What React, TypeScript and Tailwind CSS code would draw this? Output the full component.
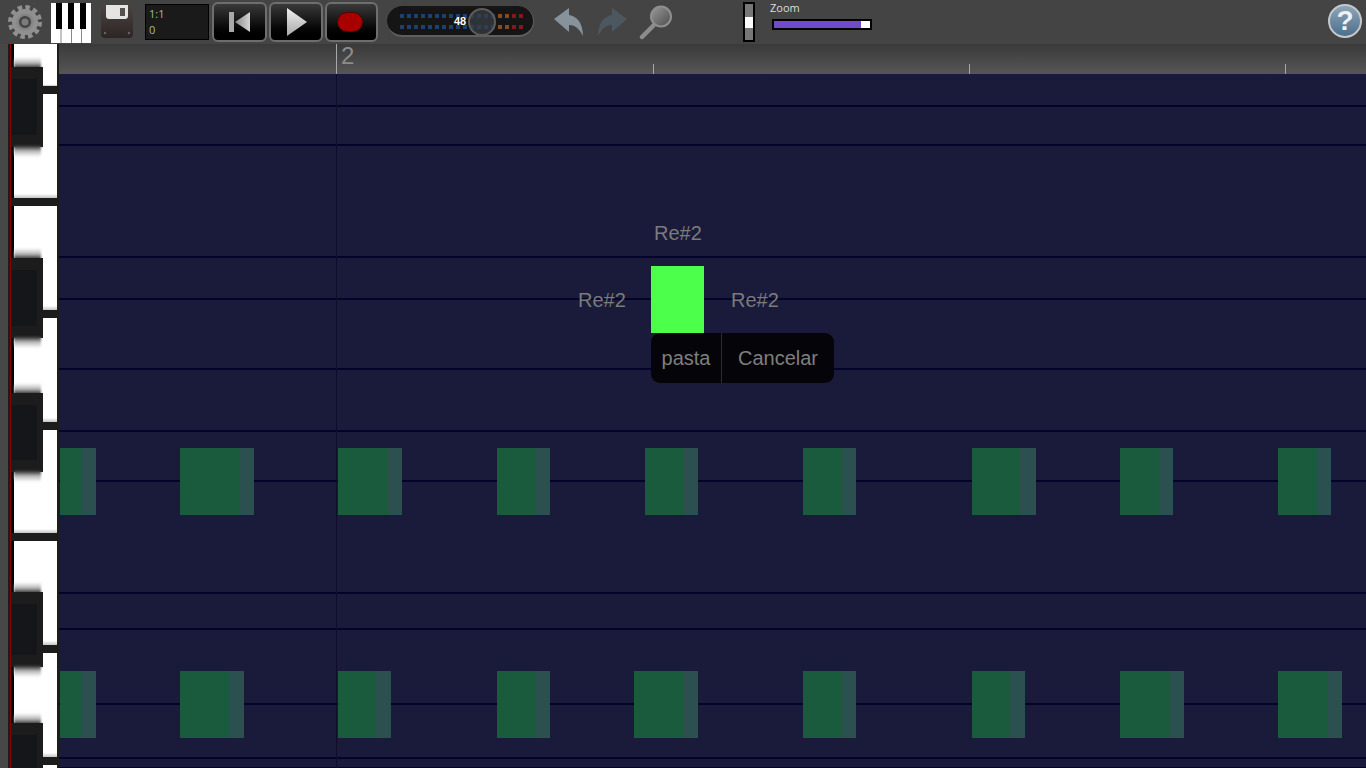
import React from "react";

const ROWS = [
  "h-[33px]",
  "h-[39px]",
  "h-[112px]",
  "h-[42px]",
  "h-[70px]",
  "h-[62px]",
  "h-[50px]",
  "h-[112px]",
  "h-[36px]",
  "h-[75px]",
  "h-[54px]",
  "h-[10px]",
];

const WHITE_KEYS = [
  "h-[42px]",
  "h-[104px]",
  "h-[104px]",
  "h-[104px]",
  "h-[103px]",
  "h-[104px]",
  "h-[104px]",
  "h-[10px]",
];

// top and height are relative to the piano column, which starts at y=44
const BLACK_KEYS = [
  { top: 23, height: 80 },
  { top: 214, height: 80 },
  { top: 349, height: 79 },
  { top: 548, height: 75 },
  { top: 679, height: 80 },
];

const NOTES_A = [
  { left: 1, width: 36, tail: 15 },
  { left: 121, width: 74, tail: 14 },
  { left: 279, width: 64, tail: 14 },
  { left: 438, width: 53, tail: 14 },
  { left: 586, width: 53, tail: 14 },
  { left: 744, width: 53, tail: 14 },
  { left: 913, width: 64, tail: 16 },
  { left: 1061, width: 53, tail: 14 },
  { left: 1219, width: 53, tail: 14 },
];

const NOTES_B = [
  { left: 1, width: 36, tail: 15 },
  { left: 121, width: 64, tail: 15 },
  { left: 279, width: 53, tail: 15 },
  { left: 438, width: 53, tail: 14 },
  { left: 575, width: 64, tail: 14 },
  { left: 744, width: 53, tail: 14 },
  { left: 913, width: 53, tail: 15 },
  { left: 1061, width: 64, tail: 14 },
  { left: 1219, width: 64, tail: 14 },
];

const LEDS = Array.from({ length: 36 }, (_, i) => {
  const col = i % 18;
  if (col >= 16) return "bg-[#84191c]";
  if (col >= 14) return "bg-[#8a4a1e]";
  return "bg-[#1a4170]";
});

function Gear() {
  return (
    <svg width="36" height="36" viewBox="0 0 36 36" className="mt-1">
      <defs>
        <radialGradient id="gearFill">
          <stop offset="0" stopColor="#5d5d5d" />
          <stop offset="1" stopColor="#909090" />
        </radialGradient>
      </defs>
      <circle cx="18" cy="18" r="14" fill="none" stroke="url(#gearFill)" strokeWidth="6" strokeDasharray="4.2 3.13" />
      <circle cx="18" cy="18" r="9.5" fill="none" stroke="url(#gearFill)" strokeWidth="7" />
      <circle cx="18" cy="18" r="3.5" fill="#7b7b7b" />
    </svg>
  );
}

function PianoIcon() {
  return (
    <svg width="40" height="41" viewBox="0 0 40 41" className="mt-[3px]">
      <rect width="40" height="40" fill="#fff" />
      <rect x="5" width="6" height="26" fill="#000" />
      <rect x="17" width="6" height="26" fill="#000" />
      <rect x="29" width="6" height="26" fill="#000" />
      <rect x="9.5" y="26" width="1" height="14" fill="#888" />
      <rect x="20" y="26" width="1" height="14" fill="#888" />
      <rect x="30" y="26" width="1" height="14" fill="#888" />
    </svg>
  );
}

function Floppy() {
  return (
    <svg width="32" height="34" viewBox="0 0 32 34" className="mt-[5px]">
      <defs>
        <linearGradient id="floppyBody" x1="0" y1="0" x2="0" y2="1">
          <stop offset="0" stopColor="#4a4442" />
          <stop offset="1" stopColor="#2c2523" />
        </linearGradient>
      </defs>
      <rect width="32" height="33" rx="4" fill="url(#floppyBody)" />
      <path d="M5 0h22v11q0 3-3 3H8q-3 0-3-3z" fill="#e4e4e4" />
      <rect x="19" y="3" width="5" height="8" fill="#56504e" />
      <circle cx="4" cy="28" r="1.2" fill="#6b6462" />
      <circle cx="28" cy="28" r="1.2" fill="#6b6462" />
    </svg>
  );
}

function TransportButton({ className, children }: { className: string; children: React.ReactNode }) {
  return (
    <div
      className={`${className} mt-[2px] h-[40px] flex items-center justify-center rounded-[6px] border-2 border-[#6e6e6e] bg-gradient-to-b from-[#3a3a3a] via-[#141414] to-[#000]`}
    >
      {children}
    </div>
  );
}

function Meter() {
  return (
    <div className="relative ml-[9px] mt-[6px] w-[147px] h-[31px] rounded-full bg-[#151515] border-b-2 border-r border-[#5f5f5f] pl-[13px] pt-[8px]">
      <div className="grid grid-cols-[repeat(18,4px)] gap-x-[3px] gap-y-[7px]">
        {LEDS.map((c, i) => (
          <div key={i} className={`h-[4px] ${c}`} />
        ))}
      </div>
      <span className="absolute left-[67px] top-[9px] text-[11px] leading-[13px] font-bold text-white font-['Liberation_Sans',sans-serif]">
        48
      </span>
      <div className="absolute left-[81px] top-[2px] w-[28px] h-[28px] rounded-full border-2 border-[#5c5c5c] bg-[#3a4046]/70" />
    </div>
  );
}

function Arrow({ flip, color }: { flip?: boolean; color: string }) {
  return (
    <svg width="31" height="30" viewBox="0 0 31 30" className={`mt-[7px] ${flip ? "-scale-x-100" : ""}`}>
      <path d="M1 12 16 1v7c8 1 14 8 14 21-4-7-7-11-14-11v7z" fill={color} />
    </svg>
  );
}

function Magnifier() {
  return (
    <svg width="36" height="36" viewBox="0 0 36 36" className="mt-1">
      <defs>
        <linearGradient id="lens" x1="0" y1="0" x2="1" y2="1">
          <stop offset="0" stopColor="#9a9a9a" />
          <stop offset="1" stopColor="#4c4c4c" />
        </linearGradient>
      </defs>
      <path d="M14 22 3 33" stroke="#8c8c8c" strokeWidth="4.5" strokeLinecap="round" />
      <circle cx="22" cy="12.5" r="10" fill="url(#lens)" stroke="#8f8f8f" strokeWidth="2" />
    </svg>
  );
}

function Help() {
  return (
    <div className="ml-auto mr-[4px] mt-[4px] w-[34px] h-[34px] rounded-full border-2 border-[#c4c8cc] bg-gradient-to-b from-[#8da5ba] to-[#4c6f8c] flex items-center justify-center text-[28px] leading-none font-bold text-[#eef0f2] font-['Liberation_Sans',sans-serif]">
      ?
    </div>
  );
}

function Toolbar() {
  return (
    <div className="h-[44px] flex bg-[#444444]">
      <div className="ml-[7px]">
        <Gear />
      </div>
      <div className="ml-[8px]">
        <PianoIcon />
      </div>
      <div className="ml-[10px]">
        <Floppy />
      </div>
      <div className="ml-[12px] mt-[4px] w-[64px] h-[36px] bg-[#1a1a1a] border border-black pl-[3px] pt-[1px] text-[11px] leading-[16px] text-[#a9bd8c] font-['Open_Sans',sans-serif]">
        <div>1:1</div>
        <div>0</div>
      </div>
      <TransportButton className="ml-[3px] w-[55px]">
        <svg width="22" height="22" viewBox="0 0 22 22">
          <defs>
            <linearGradient id="skipFill" x1="0" y1="0" x2="1" y2="0">
              <stop offset="0" stopColor="#8a8a8a" />
              <stop offset="1" stopColor="#d4d4d4" />
            </linearGradient>
          </defs>
          <rect x="0" y="1" width="5" height="20" fill="#a8a8a8" />
          <path d="M21 1v20L6 11z" fill="url(#skipFill)" />
        </svg>
      </TransportButton>
      <TransportButton className="ml-[2px] w-[54px]">
        <svg width="20" height="28" viewBox="0 0 20 28" className="ml-[2px]">
          <defs>
            <linearGradient id="playFill" x1="0" y1="0" x2="0" y2="1">
              <stop offset="0" stopColor="#f0f0f0" />
              <stop offset="1" stopColor="#a8a8a8" />
            </linearGradient>
          </defs>
          <path d="M0 0v28L20 14z" fill="url(#playFill)" />
        </svg>
      </TransportButton>
      <TransportButton className="ml-[2px] w-[53px]">
        <div className="mr-[3px] w-[26px] h-[20px] rounded-full bg-[#a80000] border border-[#5a0000]" />
      </TransportButton>
      <Meter />
      <div className="ml-[19px]">
        <Arrow color="#87929b" />
      </div>
      <div className="ml-[13px]">
        <Arrow flip color="#4d5760" />
      </div>
      <div className="ml-[11px]">
        <Magnifier />
      </div>
      <div className="ml-[68px] mt-[2px] w-[12px] h-[40px] border-2 border-black bg-[#777] flex items-center">
        <div className="w-full h-[11px] bg-white" />
      </div>
      <div className="ml-[15px] w-[102px] font-['Open_Sans',sans-serif] text-[11px] leading-[14px] text-[#dddddd]">
        <div className="mt-[1px]">Zoom</div>
        <div className="ml-[2px] mt-[4px] w-[100px] h-[11px] border-2 border-black bg-white">
          <div className="h-full w-[87px] bg-[#6f4acb]" />
        </div>
      </div>
      <Help />
    </div>
  );
}

function Piano() {
  return (
    <div className="relative w-[59px] h-[724px] shrink-0 flex bg-[#1c1c1c] overflow-hidden">
      <div className="w-[8px] bg-[#474747]" />
      <div className="w-[2px]" />
      <div className="w-[1px] bg-[#8a0000]" />
      <div className="w-[46px] flex flex-col gap-[8px]">
        {WHITE_KEYS.map((h, i) => (
          <div key={i} className={`${h} shrink-0 border-l-[3px] border-black bg-gradient-to-b from-white from-[96%] to-[#c4c4c4]`} />
        ))}
      </div>
      {BLACK_KEYS.map((k, i) => (
        <div key={i} className="absolute left-[11px] w-[32px]" style={{ top: k.top, height: k.height }}>
          <div className="absolute left-[3px] -top-[10px] w-[27px] h-[12px] blur-[1px] bg-gradient-to-b from-white/0 via-[#b8b8b8] via-50% to-[#1c1c1c]" />
          <div className="relative h-full bg-[#1c1c1c] py-[12px] pr-[6px]">
            <div className="h-full bg-[#14161a]" />
          </div>
          <div className="absolute left-[3px] -bottom-[10px] w-[27px] h-[12px] blur-[1px] bg-gradient-to-b from-[#1c1c1c] via-[#b8b8b8] via-50% to-white/0" />
        </div>
      ))}
    </div>
  );
}

function Tick({ className }: { className: string }) {
  return <div className={`absolute bottom-0 w-px bg-[#a8a8a8] ${className}`} />;
}

function NoteRow({ notes, className }: { notes: typeof NOTES_A; className: string }) {
  return (
    <>
      {notes.map((n, i) => (
        <div
          key={i}
          className={`absolute h-[67px] flex justify-end bg-[#1b5b3d] ${className}`}
          style={{ left: n.left, width: n.width }}
        >
          <div className="h-full bg-[#2c4f50]" style={{ width: n.tail }} />
        </div>
      ))}
    </>
  );
}

function Roll() {
  return (
    <div className="relative flex-1 h-[694px] bg-[#1a1a3a] overflow-hidden font-['Liberation_Sans',sans-serif]">
      {ROWS.map((h, i) => (
        <div key={i} className={`${h} border-b-2 border-[#04042a]`} />
      ))}
      <div className="absolute left-[277px] top-0 bottom-0 w-px bg-[#0e0e2c]" />

      <NoteRow notes={NOTES_A} className="top-[374px]" />
      <NoteRow notes={NOTES_B} className="top-[597px]" />

      <span className="absolute left-[595px] top-[147px] text-[20px] leading-[24px] text-[#7b7b7b]">Re#2</span>
      <span className="absolute left-[519px] top-[214px] text-[20px] leading-[24px] text-[#7b7b7b]">Re#2</span>
      <span className="absolute left-[672px] top-[214px] text-[20px] leading-[24px] text-[#7b7b7b]">Re#2</span>
      <div className="absolute left-[592px] top-[192px] w-[53px] h-[67px] bg-[#4bff4b]" />

      <div className="absolute left-[592px] top-[259px] w-[183px] h-[50px] flex rounded-[9px] bg-[#050509] text-[20px] text-[#7f7f7f]">
        <div className="w-[71px] flex items-center justify-center border-r border-[#2c2c2c]">pasta</div>
        <div className="flex-1 flex items-center justify-center">Cancelar</div>
      </div>
    </div>
  );
}

export default function App() {
  return (
    <div className="w-[1366px] h-[768px] overflow-hidden bg-[#444444]">
      <Toolbar />
      <div className="flex">
        <Piano />
        <div className="flex-1">
          <div className="relative h-[30px] bg-gradient-to-b from-[#3a3a3a] to-[#565656]">
            <Tick className="left-[277px] h-[30px]" />
            <span className="absolute left-[282px] top-0 text-[24px] leading-[24px] text-[#8c8c8c] font-['Liberation_Sans',sans-serif]">
              2
            </span>
            <Tick className="left-[594px] h-[10px]" />
            <Tick className="left-[910px] h-[10px]" />
            <Tick className="left-[1226px] h-[10px]" />
          </div>
          <Roll />
        </div>
      </div>
    </div>
  );
}
